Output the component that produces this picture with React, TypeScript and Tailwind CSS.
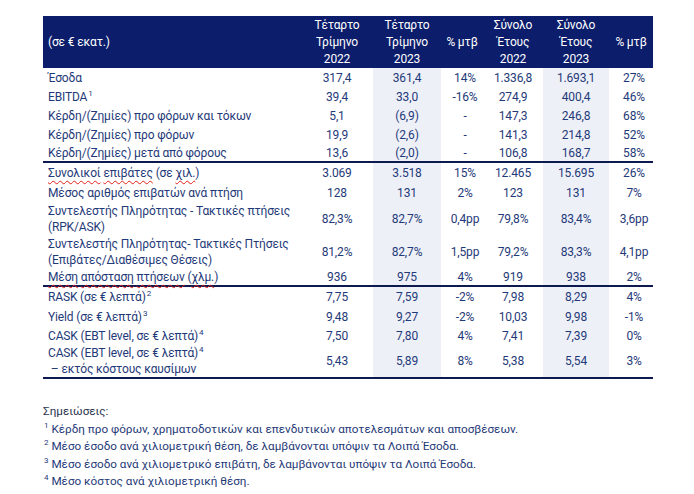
import React from "react";

const COLS = "grid-cols-[258px_72px_68px_42px_60px_66px_44px]";
const SHADE = "bg-[#eef0f8]";

type Row = {
  label: React.ReactNode;
  vals: string[];
  h: string;
  border?: boolean;
};

const Sup = ({ n }: { n: string }) => (
  <sup className="text-[8px] relative -top-[5px] ml-[1px]">{n}</sup>
);

const W = ({ children }: { children: React.ReactNode }) => (
  <span className="underline decoration-wavy decoration-[#e0201c] decoration-1 underline-offset-[3px]">
    {children}
  </span>
);

const rows: Row[] = [
  { label: "Έσοδα", vals: ["317,4", "361,4", "14%", "1.336,8", "1.693,1", "27%"], h: "h-[19px]" },
  { label: <>EBITDA<Sup n="1" /></>, vals: ["39,4", "33,0", "-16%", "274,9", "400,4", "46%"], h: "h-[19px]" },
  { label: "Κέρδη/(Ζημίες) προ φόρων και τόκων", vals: ["5,1", "(6,9)", "-", "147,3", "246,8", "68%"], h: "h-[19px]" },
  { label: "Κέρδη/(Ζημίες) προ φόρων", vals: ["19,9", "(2,6)", "-", "141,3", "214,8", "52%"], h: "h-[19px]" },
  { label: "Κέρδη/(Ζημίες) μετά από φόρους", vals: ["13,6", "(2,0)", "-", "106,8", "168,7", "58%"], h: "h-[19px]", border: true },
  {
    label: <><W>Συνολικοί</W> <W>επιβάτες</W> (σε <W>χιλ.</W>)</>,
    vals: ["3.069", "3.518", "15%", "12.465", "15.695", "26%"],
    h: "h-[20px]",
  },
  { label: "Μέσος αριθμός επιβατών ανά πτήση", vals: ["128", "131", "2%", "123", "131", "7%"], h: "h-[19px]" },
  {
    label: <>Συντελεστής Πληρότητας - Τακτικές πτήσεις<br />(RPK/ASK)</>,
    vals: ["82,3%", "82,7%", "0,4pp", "79,8%", "83,4%", "3,6pp"],
    h: "h-[33px]",
  },
  {
    label: <>Συντελεστής Πληρότητας- Τακτικές Πτήσεις<br />(Επιβάτες/Διαθέσιμες Θέσεις)</>,
    vals: ["81,2%", "82,7%", "1,5pp", "79,2%", "83,3%", "4,1pp"],
    h: "h-[33px]",
  },
  {
    label: <><W>Μέση</W> <W>απόσταση</W> <W>πτήσεων</W> (<W>χλμ.</W>)</>,
    vals: ["936", "975", "4%", "919", "938", "2%"],
    h: "h-[19px]",
    border: true,
  },
  { label: <>RASK (σε € λεπτά)<Sup n="2" /></>, vals: ["7,75", "7,59", "-2%", "7,98", "8,29", "4%"], h: "h-[20px]" },
  { label: <>Yield (σε € λεπτά)<Sup n="3" /></>, vals: ["9,48", "9,27", "-2%", "10,03", "9,98", "-1%"], h: "h-[19px]" },
  { label: <>CASK (EBT level, σε € λεπτά)<Sup n="4" /></>, vals: ["7,50", "7,80", "4%", "7,41", "7,39", "0%"], h: "h-[19px]" },
  {
    label: <>CASK (EBT level, σε € λεπτά)<Sup n="4" /><br />&nbsp;– εκτός κόστους καυσίμων</>,
    vals: ["5,43", "5,89", "8%", "5,38", "5,54", "3%"],
    h: "h-[34px]",
    border: true,
  },
];

export default function App() {
  return (
    <div
      className="w-[694px] h-[494px] bg-white pl-[43px] pt-[16px] text-[#1f3a78] text-[12px] tracking-[-0.15px]"
      style={{ fontFamily: "Roboto, 'Noto Sans', sans-serif" }}
    >
      <div className="w-[610px]">
        <div className={`grid ${COLS} h-[52px] bg-[#0c1d6b] text-white leading-[17px]`}>
          <div className="flex items-center pl-[5px]">(σε € εκατ.)</div>
          <div className="flex items-center justify-center text-center">Τέταρτο<br />Τρίμηνο<br />2022</div>
          <div className="flex items-center justify-center text-center">Τέταρτο<br />Τρίμηνο<br />2023</div>
          <div className="flex items-center justify-center text-center">% μτβ</div>
          <div className="flex items-center justify-center text-center">Σύνολο<br />Έτους<br />2022</div>
          <div className="flex items-center justify-center text-center">Σύνολο<br />Έτους<br />2023</div>
          <div className="flex items-center justify-center text-center">% μτβ</div>
        </div>
        {rows.map((r, i) => (
          <div
            key={i}
            className={`grid ${COLS} ${r.h} leading-[16px] ${r.border ? "border-b-2 border-[#0d1a4f]" : ""}`}
          >
            <div className="flex items-center pl-[5px] whitespace-nowrap">
              <div>{r.label}</div>
            </div>
            {r.vals.map((v, j) => (
              <div
                key={j}
                className={`flex items-center justify-center ${j === 1 || j === 4 ? SHADE : ""} ${
                  j === 2 || j === 5 ? "pl-[6px]" : ""
                }`}
              >
                {v}
              </div>
            ))}
          </div>
        ))}
      </div>
      <div className="mt-[24px] leading-[17.5px] text-[11.7px] tracking-normal">
        <div className="text-[#2a3550]">Σημειώσεις:</div>
        <div><Sup n="1" /> Κέρδη προ φόρων, χρηματοδοτικών και επενδυτικών αποτελεσμάτων και αποσβέσεων.</div>
        <div><Sup n="2" /> Μέσο έσοδο ανά χιλιομετρική θέση, δε λαμβάνονται υπόψιν τα Λοιπά Έσοδα.</div>
        <div><Sup n="3" /> Μέσο έσοδο ανά χιλιομετρικό επιβάτη, δε λαμβάνονται υπόψιν τα Λοιπά Έσοδα.</div>
        <div><Sup n="4" /> Μέσο κόστος ανά χιλιομετρική θέση.</div>
      </div>
    </div>
  );
}
